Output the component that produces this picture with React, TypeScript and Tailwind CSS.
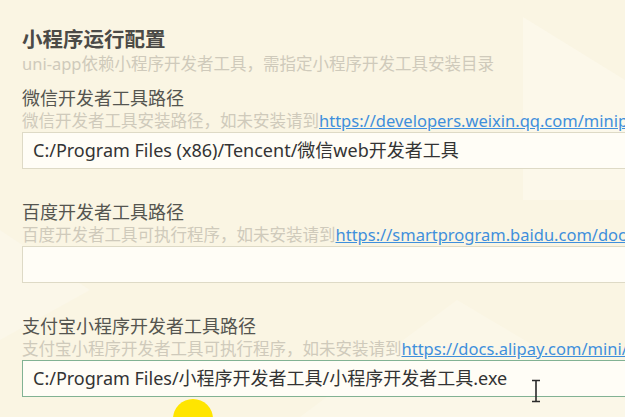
import React from "react";

const font = { fontFamily: '"Noto Sans", "Noto Sans CJK SC", sans-serif' };

function Group({
  label,
  hint,
  link,
  value,
  active,
  first,
}: {
  label: string;
  hint: string;
  link: string;
  value: string;
  active?: boolean;
  first?: boolean;
}) {
  return (
    <div className={first ? "mt-[13px]" : "mt-[32px]"}>
      <div className="text-[18px] leading-[22px] text-[#555550]">{label}</div>
      <div className="mt-[2px] text-[16.5px] leading-[20px] text-[#cfcabb] whitespace-nowrap">
        {hint}
        <span className="text-[#3f8fdc] underline underline-offset-1">{link}</span>
      </div>
      <div
        className={
          "mt-[1px] h-[37px] w-[800px] flex items-center pl-[10px] text-[18px] text-[#333333] bg-[#fffdf6] border " +
          (active ? "border-[#82b293]" : "border-[#dedac6]")
        }
      >
        {value}
      </div>
    </div>
  );
}

export default function App() {
  return (
    <div
      className="relative w-[625px] h-[417px] overflow-hidden bg-[#faf5e3]"
      style={font}
    >
      <svg className="absolute inset-0" width="625" height="417" viewBox="0 0 625 417">
        <polygon points="523,17 625,80 625,200 523,200" fill="#fcf8ea" />
        <polygon points="457,300 625,400 625,417 300,417" fill="#fbf7e8" />
        <polygon points="0,230 90,290 0,340" fill="#fbf7e9" />
      </svg>
      <div className="relative pl-[22px] pt-[27px] w-[900px]">
        <div className="text-[20.5px] leading-[24px] font-bold text-[#4b4a46]">小程序运行配置</div>
        <div className="mt-[3px] text-[16.5px] leading-[20px] text-[#cfcabb] whitespace-nowrap">
          uni-app依赖小程序开发者工具，需指定小程序开发工具安装目录
        </div>
        <Group
          first
          label="微信开发者工具路径"
          hint="微信开发者工具安装路径，如未安装请到"
          link="https://developers.weixin.qq.com/miniprogram/dev/devtools/download.html"
          value="C:/Program Files (x86)/Tencent/微信web开发者工具"
        />
        <Group
          label="百度开发者工具路径"
          hint="百度开发者工具可执行程序，如未安装请到"
          link="https://smartprogram.baidu.com/docs/develop/devtools/history/"
          value=""
        />
        <Group
          active
          label="支付宝小程序开发者工具路径"
          hint="支付宝小程序开发者工具可执行程序，如未安装请到"
          link="https://docs.alipay.com/mini/ide/download"
          value="C:/Program Files/小程序开发者工具/小程序开发者工具.exe"
        />
      </div>
      <div className="absolute left-[173px] top-[399px] w-[40px] h-[40px] rounded-full bg-[#ffe500]" />
      <svg className="absolute left-[531px] top-[379px]" width="10" height="24" viewBox="0 0 10 24">
        <path d="M1 1.5h8M1 22.5h8M5 1.5v21" stroke="#2a2a2a" strokeWidth="1.6" fill="none" />
      </svg>
    </div>
  );
}
